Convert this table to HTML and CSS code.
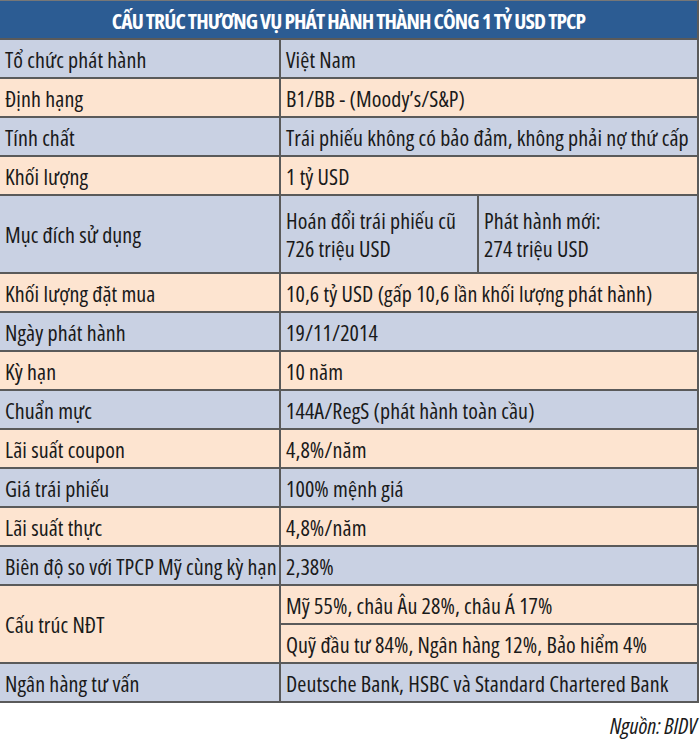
FILE: index.html
```html
<!DOCTYPE html>
<html lang="vi">
<head>
<meta charset="utf-8">
<link rel="stylesheet" href="styles.css">
</head>
<body>
<div class="page">
  <div class="table">
    <div class="cell head">CẤU TRÚC THƯƠNG VỤ PHÁT HÀNH THÀNH CÔNG 1 TỶ USD TPCP</div>

    <div class="cell blue">Tổ chức phát hành</div>
    <div class="cell blue span2">Việt Nam</div>

    <div class="cell peach">Định hạng</div>
    <div class="cell peach span2">B1/BB - (Moody’s/S&amp;P)</div>

    <div class="cell blue">Tính chất</div>
    <div class="cell blue span2">Trái phiếu không có bảo đảm, không phải nợ thứ cấp</div>

    <div class="cell peach">Khối lượng</div>
    <div class="cell peach span2">1 tỷ USD</div>

    <div class="cell blue tall">Mục đích sử dụng</div>
    <div class="cell blue tall multi">Hoán đổi trái phiếu cũ<br>726 triệu USD</div>
    <div class="cell blue tall multi">Phát hành mới:<br>274 triệu USD</div>

    <div class="cell peach">Khối lượng đặt mua</div>
    <div class="cell peach span2">10,6 tỷ USD (gấp 10,6 lần khối lượng phát hành)</div>

    <div class="cell blue">Ngày phát hành</div>
    <div class="cell blue span2">19/11/2014</div>

    <div class="cell peach">Kỳ hạn</div>
    <div class="cell peach span2">10 năm</div>

    <div class="cell blue">Chuẩn mực</div>
    <div class="cell blue span2">144A/RegS (phát hành toàn cầu)</div>

    <div class="cell peach">Lãi suất coupon</div>
    <div class="cell peach span2">4,8%/năm</div>

    <div class="cell blue">Giá trái phiếu</div>
    <div class="cell blue span2">100% mệnh giá</div>

    <div class="cell peach">Lãi suất thực</div>
    <div class="cell peach span2">4,8%/năm</div>

    <div class="cell blue">Biên độ so với TPCP Mỹ cùng kỳ hạn</div>
    <div class="cell blue span2">2,38%</div>

    <div class="cell peach tall">Cấu trúc NĐT</div>
    <div class="cell peach span2">Mỹ 55%, châu Âu 28%, châu Á 17%</div>
    <div class="cell peach span2">Quỹ đầu tư 84%, Ngân hàng 12%, Bảo hiểm 4%</div>

    <div class="cell blue">Ngân hàng tư vấn</div>
    <div class="cell blue span2">Deutsche Bank, HSBC và Standard Chartered Bank</div>
  </div>
  <div class="source">Nguồn: BIDV</div>
</div>
</body>
</html>
```
FILE: styles.css
```css
html, body {
  margin: 0;
  padding: 0;
  background: #ffffff;
}
.page {
  width: 700px;
  font-family: "Open Sans", "DejaVu Sans Condensed", sans-serif;
  font-stretch: 75%;
  color: #1a1a1a;
}
.table {
  display: grid;
  grid-template-columns: 279px 196px 218px;
  grid-auto-rows: 37px;
  gap: 2px;
  width: 697px;
  background: #5a5a5a;
  border-top: 1px solid #777;
  border-right: 2px solid #5a5a5a;
  border-bottom: 2px solid #5a5a5a;
}
.cell {
  display: flex;
  align-items: center;
  padding: 0 5px;
  font-size: 22px;
  letter-spacing: 0.1px;
  white-space: nowrap;
  overflow: hidden;
}
.head {
  grid-column: 1 / 4;
  background: #2c5c93;
  color: #ffffff;
  font-weight: bold;
  justify-content: center;
  font-size: 21.5px;
  letter-spacing: -0.9px;
  padding-top: 1px;
}
.blue { background: #c9d1e3; }
.peach { background: #fde4d0; }
.span2 { grid-column: 2 / 4; }
.tall { grid-row: span 2; }
.multi { line-height: 28px; }
.source {
  text-align: right;
  font-style: italic;
  font-size: 22px;
  padding: 7px 3px 0 0;
}
```
